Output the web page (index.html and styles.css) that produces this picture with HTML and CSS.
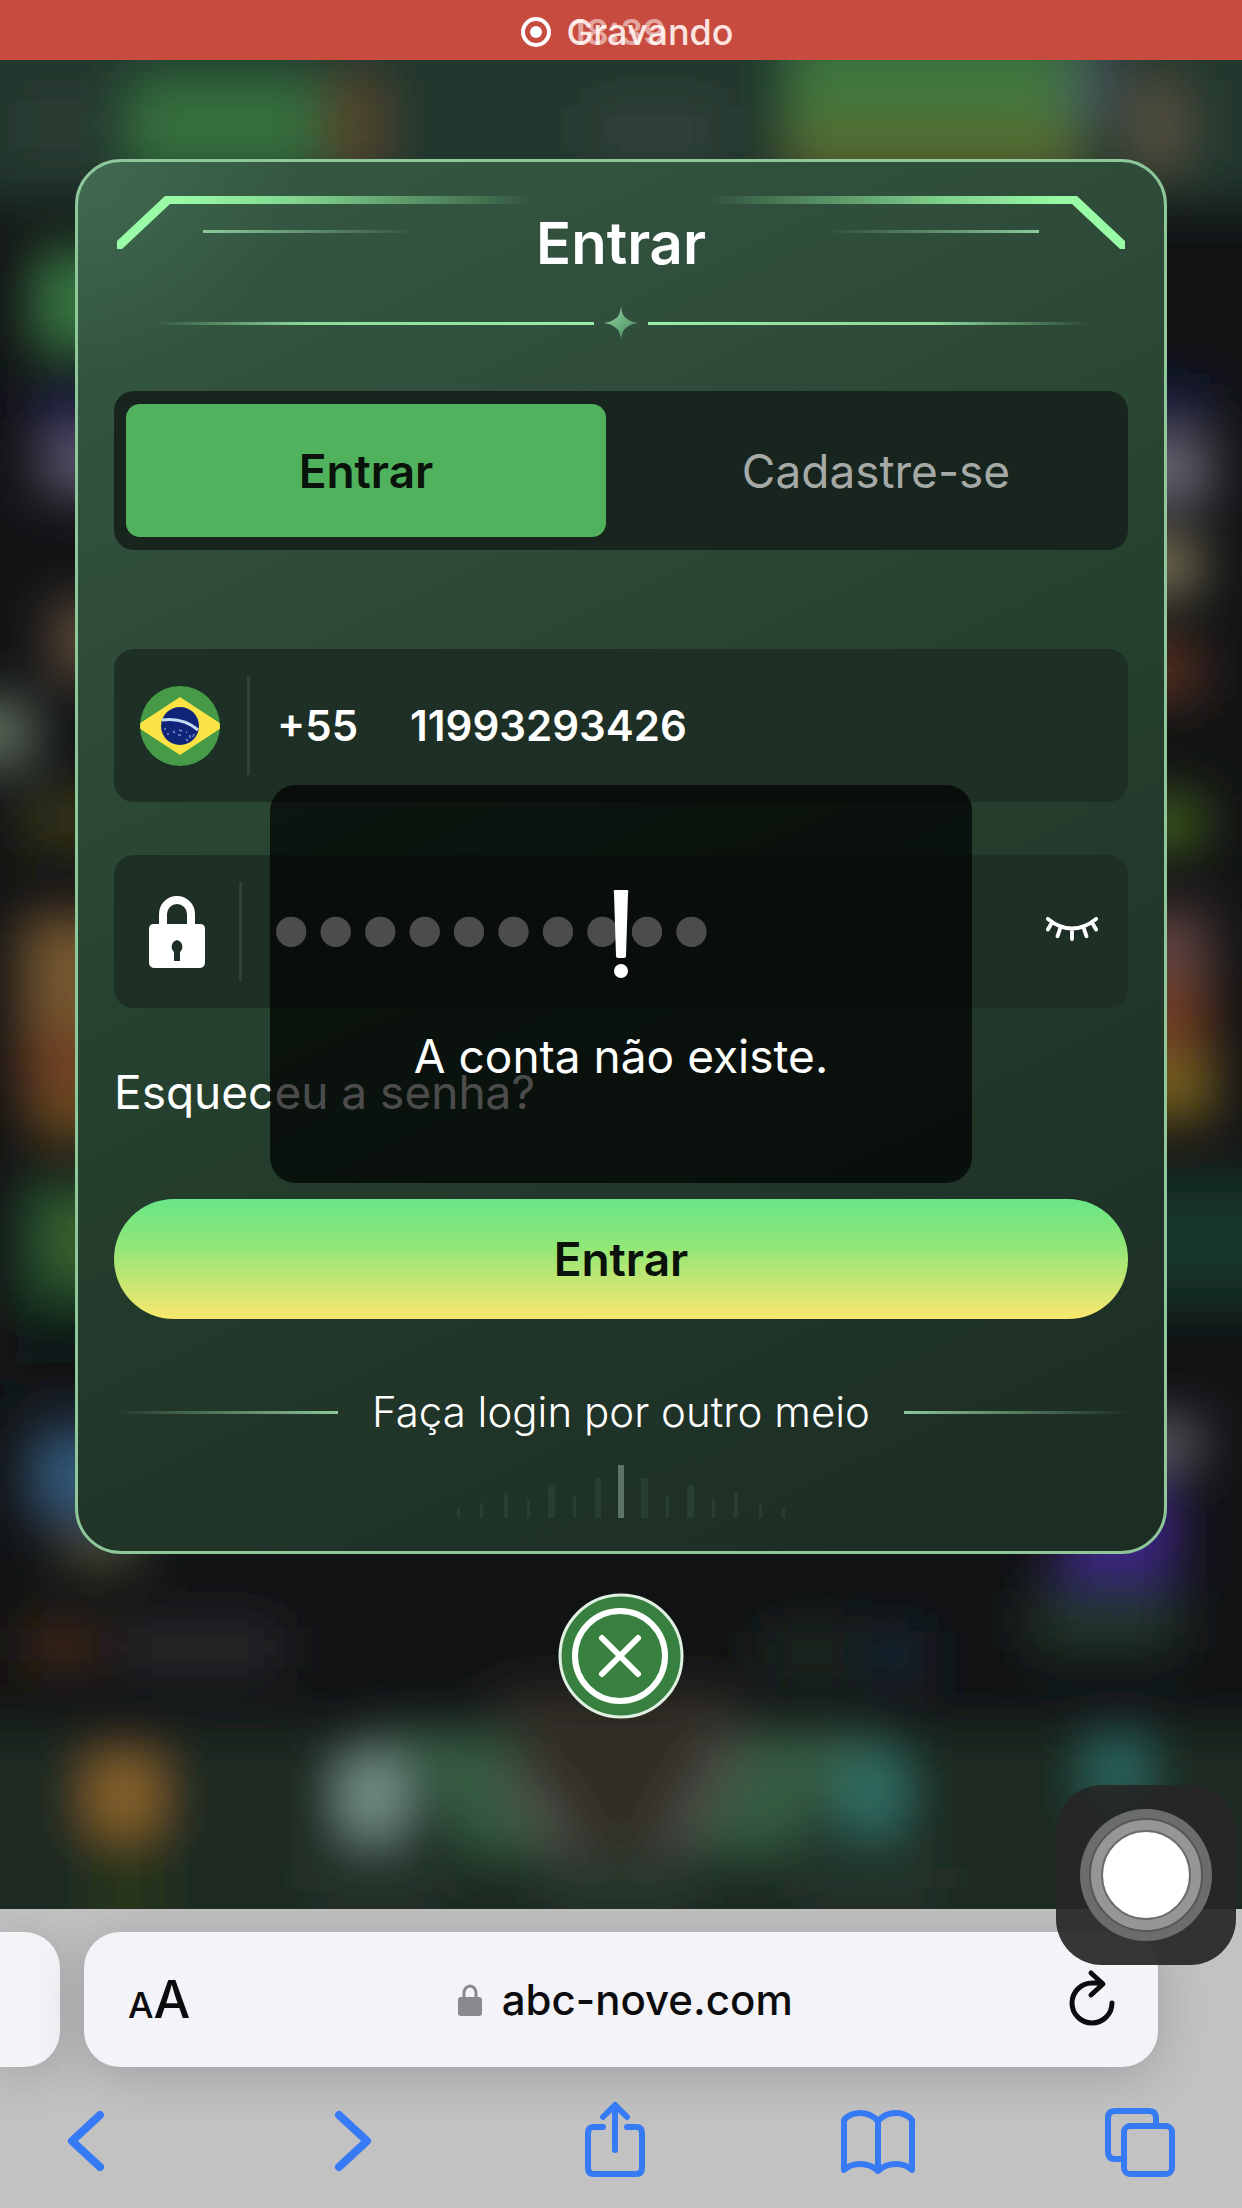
FILE: index.html
```html
<!DOCTYPE html>
<html lang="pt-BR">
<head>
  <meta charset="UTF-8">
  <meta name="viewport" content="width=device-width, initial-scale=1.0">
  <title>Entrar</title>
  <link rel="stylesheet" href="styles.css">
</head>
<body>
  <div class="status-bar">
    <svg class="rec-icon" viewBox="0 0 32 32" aria-hidden="true">
      <circle cx="16" cy="16" r="13" fill="none" stroke="#fff" stroke-width="4"/>
      <circle cx="16" cy="16" r="6" fill="#fff"/>
    </svg>
    <div class="status-text">
      <span class="status-label">Gravando</span>
      <span class="status-time">18:39</span>
    </div>
  </div>

  <main class="stage">
    <svg class="backdrop" viewBox="0 0 1242 1849" preserveAspectRatio="none" aria-hidden="true">
      <defs>
        <filter id="soft" x="-10%" y="-10%" width="120%" height="120%"><feGaussianBlur stdDeviation="25"/></filter>
        <linearGradient id="pill" x1="0" y1="0" x2="0" y2="1">
          <stop offset="0" stop-color="#397140"/><stop offset=".5" stop-color="#43793b"/><stop offset="1" stop-color="#636129"/>
        </linearGradient>
      </defs>
      <rect width="1242" height="1849" fill="#121315"/>
      <g filter="url(#soft)">
        <rect x="-60" y="-60" width="1362" height="205" fill="#24392d"/>
        <rect x="130" y="20" width="190" height="90" fill="#366f3d"/>
        <rect x="330" y="20" width="50" height="90" fill="#58472c"/>
        <rect x="590" y="45" width="130" height="50" fill="#34423a"/>
        <rect x="790" y="-30" width="290" height="145" fill="url(#pill)"/>
        <rect x="1070" y="-10" width="40" height="70" fill="#465460"/>
        <rect x="1130" y="20" width="55" height="90" fill="#54503f"/>
        <rect x="35" y="40" width="50" height="50" fill="#363e39"/>

        <rect x="30" y="190" width="120" height="105" fill="#347340"/>
        <rect x="30" y="330" width="120" height="40" fill="#1b1e50"/>
        <rect x="40" y="375" width="120" height="60" fill="#5c5670"/>
        <rect x="50" y="540" width="100" height="80" fill="#5b4837"/>
        <rect x="-60" y="640" width="95" height="65" fill="#60705f"/>
        <rect x="20" y="730" width="120" height="60" fill="#353512"/>
        <rect x="20" y="855" width="120" height="115" fill="#75562e"/>
        <rect x="20" y="970" width="120" height="70" fill="#6f4122"/>
        <rect x="30" y="1040" width="120" height="40" fill="#6a4e1f"/>
        <rect x="20" y="1120" width="130" height="120" fill="#24552d"/>
        <rect x="60" y="1150" width="60" height="60" fill="#45622a"/>
        <rect x="0" y="1250" width="140" height="70" fill="#0d1913"/>
        <rect x="30" y="1370" width="120" height="90" fill="#33587a"/>
        <rect x="60" y="1470" width="80" height="35" fill="#555635"/>
        <rect x="25" y="1565" width="75" height="40" fill="#4a2c16"/>
        <rect x="120" y="1565" width="160" height="45" fill="#2b2a2d"/>

        <rect x="1100" y="330" width="110" height="30" fill="#171e58"/>
        <rect x="1100" y="375" width="110" height="70" fill="#6a6674"/>
        <rect x="1100" y="475" width="100" height="60" fill="#7c7556"/>
        <rect x="1100" y="580" width="100" height="60" fill="#5a3222"/>
        <rect x="1100" y="735" width="105" height="55" fill="#3e5c1c"/>
        <rect x="1100" y="850" width="110" height="70" fill="#5f433f"/>
        <rect x="1100" y="920" width="110" height="85" fill="#6f3d20"/>
        <rect x="1100" y="1000" width="115" height="60" fill="#75601e"/>
        <rect x="1100" y="1115" width="200" height="130" fill="#18342a"/>
        <rect x="1100" y="1360" width="100" height="45" fill="#66636c"/>
        <rect x="1060" y="1420" width="115" height="100" fill="#40268a"/>
        <rect x="1030" y="1530" width="150" height="60" fill="#23382a"/>
        <rect x="760" y="1570" width="100" height="45" fill="#1b2a22"/>
        <rect x="870" y="1570" width="55" height="50" fill="#172837"/>

        <rect x="-60" y="1665" width="1362" height="250" fill="#1a2c22"/>
        <path d="M370 1670H500L560 1790H470Z" fill="#365c43"/>
        <path d="M750 1670H880L790 1790H690Z" fill="#365c43"/>
        <path d="M490 1630H750L640 1820H590Z" fill="#302f27"/>
        <path d="M510 1710L570 1790M735 1680L670 1790" stroke="#5b5452" stroke-width="20"/>
        <rect x="92" y="1698" width="64" height="74" fill="#8f672a"/>
        <rect x="90" y="1780" width="75" height="100" fill="#25361b"/>
        <rect x="345" y="1698" width="56" height="76" fill="#7c9892"/>
        <rect x="842" y="1692" width="60" height="80" fill="#317267"/>
        <rect x="1092" y="1672" width="50" height="80" fill="#2c6c63"/>
        <rect x="310" y="1800" width="130" height="36" fill="#28382f"/>
        <rect x="550" y="1800" width="140" height="36" fill="#2c3c32"/>
        <rect x="800" y="1800" width="140" height="36" fill="#28382f"/>
      </g>
    </svg>

    <section class="card">
      <header class="card-head">
        <svg class="corner" viewBox="0 0 420 56" aria-hidden="true">
          <defs>
            <linearGradient id="fade" gradientUnits="userSpaceOnUse" x1="60" y1="0" x2="418" y2="0">
              <stop offset="0" stop-color="#99fba6"/><stop offset=".35" stop-color="#99fba6" stop-opacity=".75"/><stop offset="1" stop-color="#99fba6" stop-opacity="0"/>
            </linearGradient>
            <linearGradient id="fade2" gradientUnits="userSpaceOnUse" x1="86" y1="0" x2="300" y2="0">
              <stop offset="0" stop-color="#8bc99a"/><stop offset="1" stop-color="#8bc99a" stop-opacity="0"/>
            </linearGradient>
          </defs>
          <path d="M0 45L48 0H418V8H53L5 53H0Z" fill="url(#fade)"/>
          <rect x="86" y="34" width="214" height="3" fill="url(#fade2)"/>
        </svg>
        <h1>Entrar</h1>
        <svg class="corner corner-right" viewBox="0 0 420 56" aria-hidden="true">
          <path d="M0 45L48 0H418V8H53L5 53H0Z" fill="url(#fade)"/>
          <rect x="86" y="34" width="214" height="3" fill="url(#fade2)"/>
        </svg>
      </header>

      <div class="star-line">
        <svg viewBox="0 0 34 34" aria-hidden="true">
          <defs>
            <linearGradient id="star" x1="0" y1="0" x2="1" y2="1"><stop offset="0" stop-color="#95dda9"/><stop offset="1" stop-color="#438254"/></linearGradient>
          </defs>
          <path d="M17 0Q18 10 22 12Q26 16 34 17Q26 18 22 22Q18 24 17 34Q16 24 12 22Q8 18 0 17Q8 16 12 12Q16 10 17 0Z" fill="url(#star)"/>
        </svg>
      </div>

      <form class="login-form">
        <div class="tabs">
          <button type="button" class="tab active">Entrar</button>
          <button type="button" class="tab">Cadastre-se</button>
        </div>

        <div class="field">
          <svg class="flag" viewBox="0 0 80 80" role="img" aria-label="Brasil">
            <defs><clipPath id="round"><circle cx="40" cy="40" r="40"/></clipPath></defs>
            <g clip-path="url(#round)">
              <rect width="80" height="80" fill="#469b47"/>
              <path d="M40 11L84 40L40 69L-4 40Z" fill="#fbe245"/>
              <circle cx="40" cy="40" r="19" fill="#10257a"/>
              <path d="M22 34Q43 31 58 44" fill="none" stroke="#c3dbf3" stroke-width="3"/>
              <path d="M25 42v2M28 47v2M33 45l2 2M39 44l3 1M38 49h3M46 53l2 2M50 49v3M53 51l1-3M46 46h1" stroke="#7690c9" stroke-width="1.5"/>
            </g>
          </svg>
          <span class="sep"></span>
          <label class="prefix" for="phone">+55</label>
          <input class="phone" id="phone" type="tel" value="11993293426">
        </div>

        <div class="field">
          <label class="lock" for="password" aria-label="Senha">
            <svg viewBox="0 0 58 74" aria-hidden="true">
              <path d="M15 34V19a14 14 0 0 1 28 0V34" fill="none" stroke="#fff" stroke-width="8"/>
              <path fill-rule="evenodd" fill="#fff" d="M6 29H52Q57 29 57 34V67Q57 73 51 73H7Q1 73 1 67V34Q1 29 6 29ZM29 45A7 7 0 0 0 26 57V66H32V57A7 7 0 0 0 29 45Z"/>
            </svg>
          </label>
          <span class="sep"></span>
          <input class="password" id="password" type="password" value="1234567890">
          <button type="button" class="eye" aria-label="Mostrar senha">
            <svg viewBox="0 0 54 32" fill="none" stroke="#fff" stroke-width="4" stroke-linecap="round" aria-hidden="true">
              <path d="M2 3Q27 23 52 3M6 7L2 14M15 12L12 21M27 14V24M39 12L42 21M48 7L52 14"/>
            </svg>
          </button>
        </div>

        <a class="forgot" href="#">Esqueceu a senha?</a>
        <button type="submit" class="submit">Entrar</button>
      </form>

      <div class="other"><span>Faça login por outro meio</span></div>

      <svg class="bars" viewBox="0 0 330 53" aria-hidden="true">
        <g fill="#2a3d33">
          <rect x="1" y="43" width="3" height="10"/><rect x="24" y="38" width="3" height="15"/>
          <rect x="48" y="28" width="4" height="25"/><rect x="71" y="34" width="3" height="19"/>
          <rect x="92" y="20" width="7" height="33"/><rect x="117" y="31" width="3" height="22"/>
          <rect x="139" y="13" width="6" height="40"/><rect x="185" y="13" width="7" height="40"/>
          <rect x="210" y="31" width="3" height="22"/><rect x="231" y="20" width="7" height="33"/>
          <rect x="256" y="34" width="3" height="19"/><rect x="278" y="28" width="4" height="25"/>
          <rect x="303" y="38" width="3" height="15"/><rect x="326" y="43" width="3" height="10"/>
        </g>
        <rect x="162" y="0" width="6" height="53" fill="#5c7365"/>
      </svg>
    </section>

    <button class="close" aria-label="Fechar">
      <svg viewBox="0 0 126 126" fill="none" stroke="#fff" aria-hidden="true">
        <circle cx="63" cy="63" r="61" fill="#38803f" stroke="#e0f1e2" stroke-width="3"/>
        <circle cx="62" cy="63" r="45" stroke-width="6"/>
        <path d="M44 45L80 81M80 45L44 81" stroke-width="6" stroke-linecap="round"/>
      </svg>
    </button>

    <div class="toast" role="alert">
      <svg viewBox="0 0 16 90" aria-hidden="true">
        <path d="M2 0H14Q16 0 15 3L13 66Q13 68 11 68H5Q3 68 3 66L1 3Q0 0 2 0Z" fill="#fff"/>
        <circle cx="8" cy="81" r="7" fill="#fff"/>
      </svg>
      <p>A conta não existe.</p>
    </div>
  </main>

  <footer class="browser">
    <div class="address-row">
      <div class="prev-tab"></div>
      <div class="address">
        <button class="text-size" aria-label="Tamanho do texto"><small>A</small>A</button>
        <a class="url" href="#">
          <svg viewBox="0 0 24 32" aria-hidden="true">
            <path d="M6 15V9a6 7 0 0 1 12 0V15" fill="none" stroke="#8a898e" stroke-width="3"/>
            <rect y="13" width="24" height="19" rx="3" fill="#8a898e"/>
          </svg>
          abc-nove.com
        </a>
        <button class="reload" aria-label="Recarregar">
          <svg viewBox="0 0 48 62" fill="none" stroke="#0c0c0e" stroke-width="5" stroke-linecap="round" stroke-linejoin="round" aria-hidden="true">
            <path d="M44 34A20 20 0 1 1 24 14H34M23 4L35 15L23 26"/>
          </svg>
        </button>
      </div>
    </div>
    <nav class="toolbar">
      <button aria-label="Voltar"><svg viewBox="0 0 76 80"><path d="M48 14L20 40L48 66"/></svg></button>
      <button aria-label="Avançar"><svg viewBox="0 0 76 80"><path d="M24 14L52 40L24 66"/></svg></button>
      <button aria-label="Compartilhar"><svg class="thin" viewBox="0 0 76 80"><path d="M26 26H17Q11 26 11 32V67Q11 73 17 73H59Q65 73 65 67V32Q65 26 59 26H50M38 49V5M26 16L38 4L50 16"/></svg></button>
      <button aria-label="Favoritos"><svg class="thin" viewBox="0 0 76 80"><path d="M38 20Q31 12 20 12Q10 12 4 19V69Q10 63 20 63Q31 63 38 70Q45 63 56 63Q66 63 72 69V19Q66 12 56 12Q45 12 38 20ZM38 20V70"/></svg></button>
      <button aria-label="Abas"><svg class="thin" viewBox="0 0 76 80"><rect x="22" y="25" width="48" height="48" rx="6"/><path d="M22 58H13Q6 58 6 51V17Q6 10 13 10H47Q54 10 54 17V25"/></svg></button>
    </nav>
  </footer>

  <button class="assistive" aria-label="AssistiveTouch">
    <svg viewBox="0 0 132 132" aria-hidden="true">
      <circle cx="66" cy="66" r="66" fill="#6b6d6c"/>
      <circle cx="66" cy="66" r="56" fill="#959796" stroke="#565857" stroke-width="2"/>
      <circle cx="66" cy="66" r="44" fill="#fff" stroke="#6b6c6c" stroke-width="2"/>
    </svg>
  </button>
</body>
</html>
```
FILE: styles.css
```css
* {
  box-sizing: border-box;
}
body {
  margin: 0;
  min-height: 100vh;
  display: flex;
  flex-direction: column;
  position: relative;
  font-family: "Inter", sans-serif;
  font-size: 46px;
  color: #fff;
  background: #121315;
}
button, input {
  font: inherit;
  color: inherit;
  border: none;
  background: none;
  padding: 0;
  margin: 0;
}
button {
  cursor: pointer;
}
svg {
  display: block;
}

/* status bar */
.status-bar {
  height: 60px;
  display: flex;
  align-items: center;
  justify-content: center;
  gap: 14px;
  padding: 4px 0 0 12px;
  background: #c74b3e;
  font-size: 36px;
  line-height: 56px;
}
.rec-icon {
  width: 32px;
}
.status-text {
  position: relative;
  font-weight: 500;
}
.status-label {
  color: #fbe3e0;
}
.status-time {
  position: absolute;
  left: 4px;
  top: 0;
  font-weight: 600;
  color: rgba(255, 255, 255, 0.5);
}

/* page behind the dialog */
.stage {
  flex: 1;
  position: relative;
  display: flex;
  flex-direction: column;
  align-items: center;
  padding: 99px 75px 0;
  overflow: hidden;
}
.backdrop {
  position: absolute;
  inset: 0;
  width: 100%;
  height: 100%;
}

/* login card */
.card {
  position: relative;
  width: 100%;
  padding: 0 36px 33px;
  border: 3px solid #8dc79a;
  border-radius: 46px;
  background: radial-gradient(circle at 0 0, rgba(90, 140, 110, 0.3), transparent 220px),
    linear-gradient(155deg, #365b44 0%, #304f3c 20%, #26422f 48%, #213529 72%, #1c2d24 100%);
}
.card-head {
  position: relative;
  padding-top: 49px;
}
.card-head h1 {
  margin: 0;
  font-size: 58px;
  line-height: 64px;
  font-weight: 600;
  text-align: center;
}
.corner {
  position: absolute;
  left: 3px;
  top: 34px;
  width: 420px;
}
.corner-right {
  left: auto;
  right: 3px;
  transform: scaleX(-1);
}
.star-line {
  display: flex;
  align-items: center;
  gap: 10px;
  margin: 31px 40px 51px;
}
.star-line svg {
  width: 34px;
}
.star-line::before, .star-line::after {
  content: "";
  flex: 1;
  height: 3px;
  background: linear-gradient(90deg, transparent, #8ddb9c 35%, #9beba8);
}
.star-line::after {
  background: linear-gradient(270deg, transparent, #8ddb9c 35%, #9beba8);
}

.login-form {
  display: flex;
  flex-direction: column;
}
.tabs {
  display: flex;
  gap: 30px;
  padding: 13px 12px;
  margin-bottom: 99px;
  border-radius: 20px;
  background: #18241e;
}
.tab {
  flex: 1 1 0;
  height: 133px;
  border-radius: 14px;
  color: #a5aaa7;
}
.tab.active {
  background: #51b25d;
  color: #0a120c;
  font-weight: 600;
}
.field {
  display: flex;
  align-items: center;
  height: 153px;
  padding: 0 30px 0 26px;
  border-radius: 20px;
  background: #1e2f25;
}
.field + .field {
  margin-top: 53px;
}
.flag {
  width: 80px;
}
.sep {
  width: 3px;
  height: 99px;
  margin: 0 27px;
  background: #2f4237;
}
.prefix {
  font-size: 42px;
  font-weight: 600;
}
.phone {
  flex: 1;
  min-width: 0;
  margin-left: 52px;
  font-size: 42px;
  font-weight: 600;
}
.lock {
  padding: 0 6px 0 8px;
}
.lock svg {
  width: 58px;
}
.password {
  flex: 1;
  min-width: 0;
  height: 130px;
  font-family: "Liberation Serif", serif;
  font-size: 127px;
}
.eye svg {
  width: 52px;
}
.forgot {
  align-self: flex-start;
  margin-top: 60px;
  line-height: 48px;
  color: #fff;
  text-decoration: none;
}
.submit {
  height: 120px;
  margin-top: 83px;
  border-radius: 60px;
  background: linear-gradient(#69e587, #8fe777 38%, #fae76d);
  color: #0b110b;
  font-weight: 600;
}
.other {
  display: flex;
  align-items: center;
  gap: 34px;
  margin-top: 69px;
  font-size: 42px;
  line-height: 48px;
  font-weight: 300;
}
.other::before, .other::after {
  content: "";
  flex: 1;
  height: 3px;
  background: linear-gradient(90deg, transparent, #8dc79a);
}
.other::after {
  background: linear-gradient(270deg, transparent, #8dc79a);
}
.bars {
  width: 330px;
  margin: 29px auto 0;
}
.close {
  position: relative;
  width: 126px;
  margin-top: 39px;
}

/* message over the form */
.toast {
  position: absolute;
  top: 725px;
  left: 50%;
  transform: translateX(-50%);
  width: 702px;
  height: 398px;
  padding-top: 105px;
  border-radius: 26px;
  background: rgba(0, 0, 0, 0.7);
  text-align: center;
}
.toast svg {
  width: 16px;
  margin: 0 auto;
}
.toast p {
  margin: 52px 0 0;
  line-height: 48px;
}

/* browser chrome */
.browser {
  height: 299px;
  padding-top: 23px;
  background: #c2c2c3;
  overflow: hidden;
}
.address-row {
  display: flex;
  gap: 24px;
  padding-right: 84px;
}
.prev-tab {
  width: 60px;
  border-radius: 0 36px 36px 0;
  background: #f4f3f7;
  box-shadow: 0 8px 48px rgba(60, 60, 67, 0.25);
}
.address {
  flex: 1;
  height: 135px;
  display: flex;
  align-items: center;
  justify-content: space-between;
  padding: 0 42px 0 44px;
  border-radius: 36px;
  background: #f4f3f7;
  box-shadow: 0 8px 48px rgba(60, 60, 67, 0.25);
  color: #0c0c0e;
  font-size: 42px;
  font-weight: 500;
}
.text-size {
  font-size: 52px;
}
.text-size small {
  font-size: 36px;
}
.url {
  display: flex;
  align-items: center;
  gap: 20px;
  margin-right: 8px;
  color: inherit;
  text-decoration: none;
}
.url svg {
  width: 24px;
}
.reload svg {
  width: 48px;
}
.toolbar {
  display: flex;
  justify-content: space-between;
  padding: 34px 64px 0 52px;
}
.toolbar svg {
  width: 76px;
  fill: none;
  stroke: #367bf5;
  stroke-width: 8;
  stroke-linecap: round;
  stroke-linejoin: round;
}
.toolbar .thin {
  stroke-width: 6;
}

/* floating button of the system */
.assistive {
  position: absolute;
  right: 6px;
  bottom: 243px;
  padding: 24px;
  border-radius: 46px;
  background: rgba(38, 38, 38, 0.92);
}
.assistive svg {
  width: 132px;
}
```
